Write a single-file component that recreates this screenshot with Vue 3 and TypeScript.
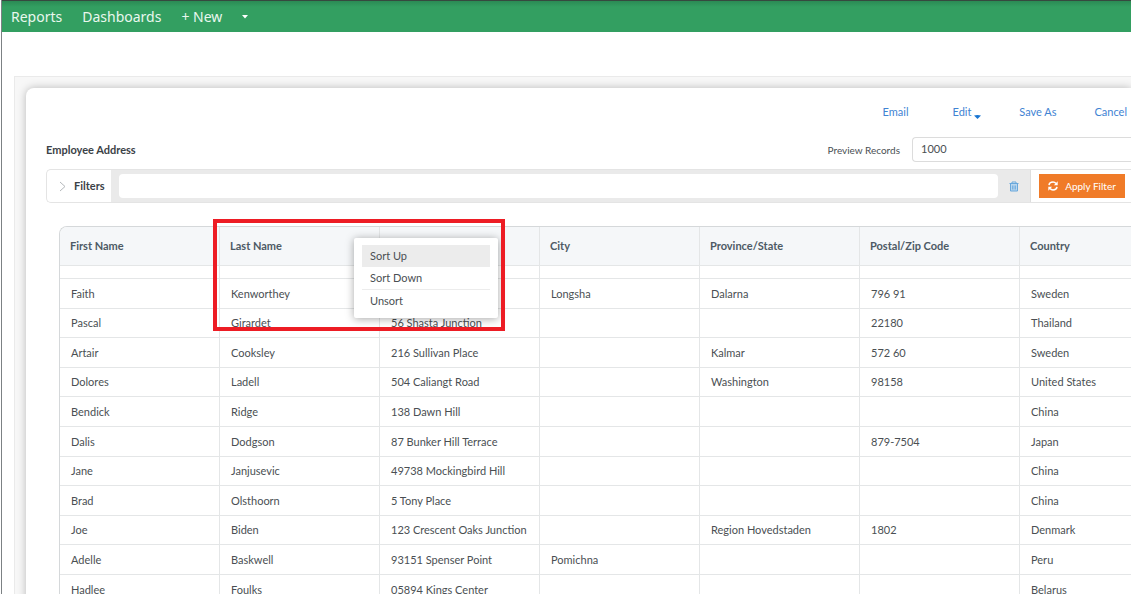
<script setup lang="ts">
import { ref } from 'vue'

interface Employee {
  first: string
  last: string
  address: string
  city: string
  province: string
  postal: string
  country: string
}

const columns: string[] = ['First Name', 'Last Name', '', 'City', 'Province/State', 'Postal/Zip Code', 'Country']

const row = (
  first: string,
  last: string,
  address: string,
  city: string,
  province: string,
  postal: string,
  country: string,
): Employee => ({ first, last, address, city, province, postal, country })

const employees: Employee[] = [
  row('Faith', 'Kenworthey', '', 'Longsha', 'Dalarna', '796 91', 'Sweden'),
  row('Pascal', 'Girardet', '56 Shasta Junction', '', '', '22180', 'Thailand'),
  row('Artair', 'Cooksley', '216 Sullivan Place', '', 'Kalmar', '572 60', 'Sweden'),
  row('Dolores', 'Ladell', '504 Caliangt Road', '', 'Washington', '98158', 'United States'),
  row('Bendick', 'Ridge', '138 Dawn Hill', '', '', '', 'China'),
  row('Dalis', 'Dodgson', '87 Bunker Hill Terrace', '', '', '879-7504', 'Japan'),
  row('Jane', 'Janjusevic', '49738 Mockingbird Hill', '', '', '', 'China'),
  row('Brad', 'Olsthoorn', '5 Tony Place', '', '', '', 'China'),
  row('Joe', 'Biden', '123 Crescent Oaks Junction', '', 'Region Hovedstaden', '1802', 'Denmark'),
  row('Adelle', 'Baskwell', '93151 Spenser Point', 'Pomichna', '', '', 'Peru'),
  row('Hadlee', 'Foulks', '05894 Kings Center', '', '', '', 'Belarus'),
]

const previewRecords = ref('1000')
const filterText = ref('')
</script>

<template>
  <div class="page">
    <nav class="topbar">
      <a href="#">Reports</a>
      <a href="#">Dashboards</a>
      <a href="#">+ New</a>
      <button class="new-toggle" type="button" aria-label="New">
        <svg width="6" height="4" viewBox="0 0 6 4"><path d="M0 0h6L3 3.5z" fill="#fff" /></svg>
      </button>
    </nav>

    <main class="panel">
      <section class="card">
        <div class="actions">
          <a href="#">Email</a>
          <button class="edit" type="button">
            Edit
            <svg width="7" height="4" viewBox="0 0 7 4"><path d="M0 .5Q3.500-.5 7 .5L3.500 4z" fill="#1976d2" /></svg>
          </button>
          <a href="#">Save As</a>
          <a href="#">Cancel</a>
        </div>

        <div class="title-row">
          <h1>Employee Address</h1>
          <label for="preview">Preview Records</label>
          <input id="preview" v-model="previewRecords" type="text" />
        </div>

        <div class="filter-bar">
          <button class="filters" type="button">
            <svg width="7" height="11" viewBox="0 0 7 11">
              <path d="M1 1l5 4.500-5 4.500" fill="none" stroke="#b4b8bb" stroke-width="1" />
            </svg>
            Filters
          </button>
          <div class="filter-field">
            <input v-model="filterText" type="text" aria-label="Filters" />
            <button class="trash" type="button" aria-label="Clear filters">
              <svg width="10" height="11" viewBox="0 0 10 11" fill="none" stroke="#69a8dc">
                <path d="M.5 2.500h9M3 2.300V1h4v1.300" />
                <path d="M1.500 3v7h7V3" fill="#b9d6ee" />
                <path d="M3.500 4.500v4M5 4.500v4M6.500 4.500v4" stroke-width=".8" />
              </svg>
            </button>
          </div>
          <button class="apply" type="button">
            <svg width="10" height="10" viewBox="0 0 10 10" fill="none" stroke="#fff" stroke-width="1.500">
              <path d="M1 4.200C1.300 2.200 3 1.100 5 1.100c1.300 0 2.300.5 3 1.300" />
              <path d="M9 5.800C8.700 7.800 7 8.900 5 8.900c-1.300 0-2.300-.5-3-1.300" />
              <path d="M9.700.3v3.900H5.900zM.3 9.700V5.800h3.800z" fill="#fff" stroke="none" />
            </svg>
            Apply Filter
          </button>
        </div>

        <div class="grid-area">
          <div class="grid-frame">
            <table>
              <thead>
                <tr>
                  <th v-for="(column, i) in columns" :key="i" scope="col">{{ column }}</th>
                </tr>
              </thead>
              <tbody>
                <tr class="spacer">
                  <td v-for="(column, i) in columns" :key="i"></td>
                </tr>
                <tr v-for="e in employees" :key="e.last">
                  <td>{{ e.first }}</td>
                  <td>{{ e.last }}</td>
                  <td>{{ e.address }}</td>
                  <td>{{ e.city }}</td>
                  <td>{{ e.province }}</td>
                  <td>{{ e.postal }}</td>
                  <td>{{ e.country }}</td>
                </tr>
              </tbody>
            </table>
          </div>
          <div class="sort-menu" role="menu">
            <button class="active" type="button" role="menuitem">Sort Up</button>
            <button type="button" role="menuitem">Sort Down</button>
            <button class="divided" type="button" role="menuitem">Unsort</button>
          </div>
          <div class="highlight"></div>
        </div>
      </section>
    </main>
  </div>
</template>

<style>
body {
  margin: 0;
  background: #fff;
}
</style>

<style scoped>
* {
  box-sizing: border-box;
}

.page {
  height: 100vh;
  overflow: hidden;
  margin-left: 1px;
  border-left: 1px solid #7c8184;
  color: #4a4f53;
  font: 11px/16px Lato, 'Open Sans', sans-serif;
}

button,
input {
  margin: 0;
  font: inherit;
  color: inherit;
}

button {
  padding: 0;
  border: 0;
  background: none;
}

a {
  text-decoration: none;
}

.topbar {
  display: flex;
  align-items: center;
  gap: 20px;
  height: 32px;
  padding-left: 9px;
  border-top: 1px solid #36493f;
  background: linear-gradient(#2b8a54, #339f61 6px);
  color: #fff;
  font: 14px/20px 'Noto Sans', 'Open Sans', sans-serif;
}

.topbar a {
  color: #e9f7ee;
}

.topbar .new-toggle {
  display: flex;
}

.panel {
  margin: 44px 0 0 12px;
  padding: 11px 0 0 11px;
  border: 1px solid #eaeaea;
  border-right: 0;
  background: #f7f7f7;
}

.card {
  padding: 16px 0 20px 20px;
  border-radius: 8px 0 0 0;
  background: #fff;
  box-shadow: 0 0 9px rgba(0, 0, 0, 0.25);
}

.actions {
  display: flex;
  justify-content: flex-end;
  gap: 38px;
  padding-right: 4px;
  color: #3f83d3;
}

.actions a {
  color: inherit;
}

.edit {
  padding-left: 6px;
}

.edit svg {
  vertical-align: sub;
}

.title-row {
  display: flex;
  align-items: center;
  margin-top: 17px;
}

h1 {
  flex: 1;
  margin: 0;
  font-size: 11px;
  line-height: 16px;
  color: #3b4247;
}

.title-row label {
  font-size: 10px;
}

.title-row input {
  width: 219px;
  height: 25px;
  margin-left: 12px;
  padding: 0 8px 2px;
  border: 1px solid #dcdcdc;
  border-right: 0;
  border-radius: 4px 0 0 4px;
  background: #fff;
}

.filter-bar {
  display: flex;
  align-items: center;
  height: 34px;
  margin-top: 7px;
  padding-right: 6px;
  border: 1px solid #e4e4e4;
  border-right: 0;
  border-radius: 5px 0 0 5px;
}

.filters {
  display: flex;
  align-items: center;
  gap: 8px;
  width: 64px;
  padding-left: 12px;
  font-weight: 700;
  color: #3b4247;
}

.filter-field {
  display: flex;
  flex: 1;
  align-items: center;
  height: 32px;
  padding-left: 8px;
  border-right: 1px solid #dedede;
  background: #eaeaea;
}

.filter-field input {
  flex: 1;
  min-width: 0;
  height: 24px;
  border: 0;
  border-radius: 4px;
  background: #fff;
}

.trash {
  display: flex;
  justify-content: center;
  width: 32px;
}

.apply {
  display: flex;
  align-items: center;
  justify-content: center;
  gap: 7px;
  width: 86px;
  height: 24px;
  margin-left: 8px;
  background: #f07b28;
  color: #fff;
  font-size: 10px;
}

.grid-area {
  position: relative;
  margin: 23px 0 0 13px;
}

.grid-frame {
  overflow: hidden;
  border: 1px solid #d5d8da;
  border-right: 0;
  border-radius: 8px 0 0 0;
}

table {
  width: 1120px;
  table-layout: fixed;
  border-collapse: separate;
  border-spacing: 0;
}

th,
td {
  overflow: hidden;
  padding: 0 11px;
  border-right: 1px solid #e4e6e7;
  border-bottom: 1px solid #e4e6e7;
  text-align: left;
  white-space: nowrap;
}

th {
  height: 39px;
  padding: 0 10px;
  background: #f5f7f9;
  color: #4d5a65;
}

td {
  height: 30px;
}

tbody tr:nth-child(5n + 3) td,
tbody tr:nth-child(5n + 5) td {
  height: 29px;
}

tbody .spacer td {
  height: 13px;
}

.sort-menu {
  position: absolute;
  top: 12px;
  left: 295px;
  width: 144px;
  padding: 7px 8px 6px;
  border-radius: 2px;
  background: #fff;
  box-shadow: 0 1px 8px rgba(0, 0, 0, 0.35);
}

.sort-menu button {
  display: block;
  width: 100%;
  height: 22px;
  padding: 0 8px;
  text-align: left;
}

.sort-menu .active {
  background: #ececec;
}

.sort-menu .divided {
  height: 23px;
  border-top: 1px solid #ececec;
}

.highlight {
  position: absolute;
  top: -7px;
  left: 154px;
  width: 292px;
  height: 112px;
  border: 4px solid #ed1c24;
  pointer-events: none;
}
</style>
